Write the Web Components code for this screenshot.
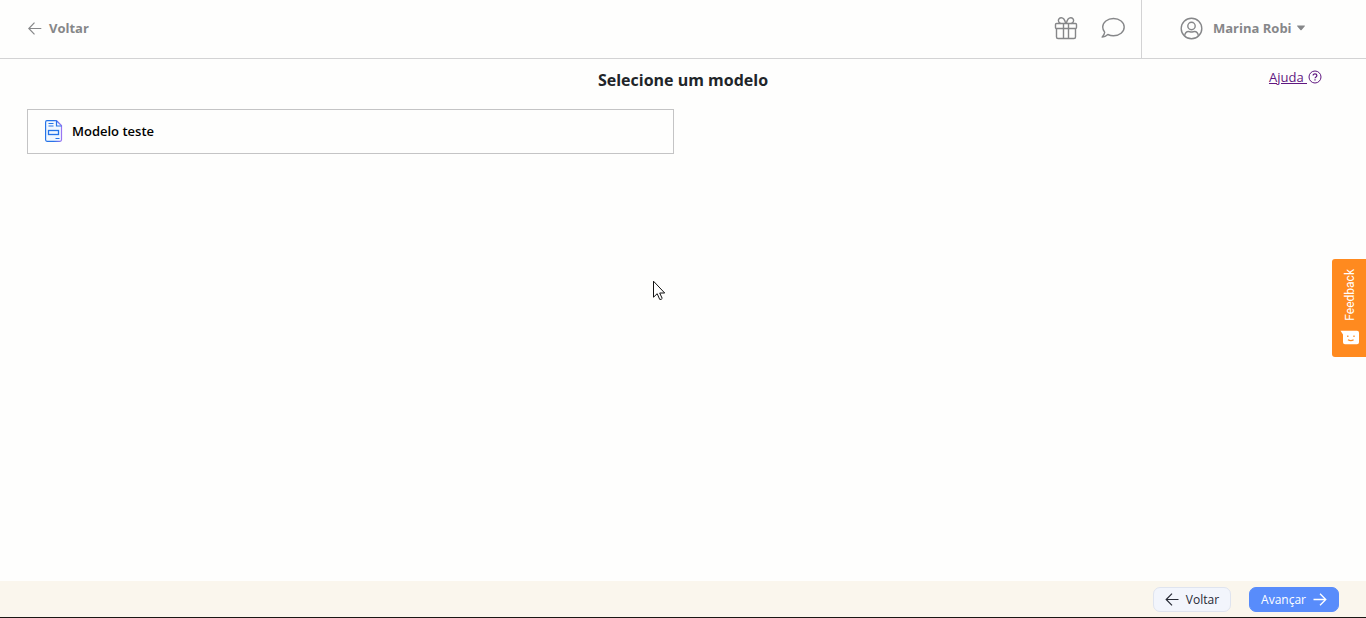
<!DOCTYPE html>
<html lang="pt-BR">
<head>
<meta charset="utf-8">
<meta name="viewport" content="width=device-width, initial-scale=1">
<title>Selecione um modelo</title>
<style>
  body { margin: 0; background: #fefefd; color: #212529; font: 13px/20px "Open Sans", "Noto Sans", sans-serif; }
</style>
</head>
<body>
<template-page></template-page>

<script>
const define = (name, markup) => customElements.define(name, class extends HTMLElement {
  constructor() {
    super();
    this.attachShadow({ mode: 'open' }).innerHTML = markup;
  }
});

define('user-menu', `
  <style>
    :host { display: block; }
    button { display: flex; align-items: center; gap: 10px; padding: 0; border: 0; background: none; color: #868789; font: inherit; font-weight: 700; cursor: pointer; }
    .caret { margin-left: -6px; }
    svg { display: block; }
  </style>
  <button type="button" aria-haspopup="menu">
    <svg width="23" height="23" viewBox="0 0 23 23" fill="none" stroke="currentColor" stroke-width="1.4" aria-hidden="true">
      <circle cx="11.500" cy="11.500" r="10.300"/><circle cx="11.500" cy="9" r="3.700"/>
      <path d="M4.600 18.800c.5-3 2-4.300 3.800-4.300 1.200 0 1.700.5 3.100.5s1.900-.5 3.100-.5c1.800 0 3.300 1.300 3.800 4.300"/>
    </svg>
    <slot></slot>
    <svg class="caret" width="10" height="6" viewBox="0 0 10 6" fill="currentColor" aria-hidden="true"><path d="M1.500.5h7q.8 0 .3.800L5.600 4.900q-.6.600-1.200 0L1.200 1.300q-.5-.8.300-.8z"/></svg>
  </button>`);

define('top-bar', `
  <style>
    :host { display: block; border-bottom: 1px solid #d3d3d4; color: #868789; }
    header { display: flex; align-items: stretch; height: 58px; }
    nav, .tools, .account { display: flex; align-items: center; padding-bottom: 2px; }
    nav { flex: 1; padding-left: 28px; }
    a { display: flex; align-items: center; gap: 7px; color: inherit; font-weight: 700; text-decoration: none; }
    .tools { gap: 23px; padding-right: 16px; }
    .tools button { padding: 0; border: 0; background: none; color: inherit; cursor: pointer; }
    .account { box-sizing: border-box; width: 225px; padding-left: 38px; border-left: 1px solid #d3d3d4; }
    svg { display: block; }
  </style>
  <header>
    <nav><a href="#voltar">
      <svg width="14" height="14" viewBox="0 0 14 14" fill="none" stroke="currentColor" stroke-width="1.200" aria-hidden="true"><path d="M13.300 7.500H.800M6.500 1.700.800 7.500l5.700 5.800"/></svg>
      Voltar</a></nav>
    <div class="tools">
      <button type="button" aria-label="Novidades">
        <svg width="24" height="23" viewBox="0 0 24 23" fill="none" stroke="currentColor" stroke-width="1.400" stroke-linejoin="round" aria-hidden="true">
          <rect x="1.500" y="6.500" width="21" height="5" rx="1"/><path d="M2.500 11.500v8.500q0 1.500 1.500 1.500h16q1.500 0 1.500-1.500v-8.500M9.500 6.500v15M14.500 6.500v15"/>
          <path d="M11.700 6.500C11 3.400 9.600.8 7.300.8c-2 0-3 1.500-2.900 3 .1 1.300 1 2.200 2.100 2.700M12.300 6.500C13 3.400 14.400.8 16.700.8c2 0 3 1.500 2.900 3-.1 1.300-1 2.200-2.100 2.700"/>
        </svg>
      </button>
      <button type="button" aria-label="Mensagens">
        <svg width="24" height="22" viewBox="0 0 24 22" fill="none" stroke="currentColor" stroke-width="1.400" stroke-linejoin="round" aria-hidden="true"><path d="M12.500 1.500c6 0 10.700 3.800 10.700 8.600s-4.700 8.700-10.700 8.700c-2.100 0-4-.5-5.700-1.300-1.500 1.500-3.300 2.500-5.600 2.600 1.400-1.300 2.300-3.100 2.500-4.900-1.300-1.400-2-3.200-2-5.100 0-4.800 4.800-8.600 10.800-8.600z"/></svg>
      </button>
    </div>
    <div class="account"><user-menu>Marina Robi</user-menu></div>
  </header>`);

define('template-card', `
  <style>
    :host { display: block; }
    button { display: flex; align-items: center; gap: 9px; width: 100%; height: 45px; padding: 0 17px 2px; border: 1px solid #c4c4c5; background: transparent; color: #000; font: inherit; font-weight: 600; cursor: pointer; }
    svg { display: block; }
  </style>
  <button type="button">
    <svg width="18" height="22" viewBox="0 0 18 22" fill="none" aria-hidden="true">
      <defs><linearGradient id="edge" x1="0" x2="1"><stop offset=".5" stop-color="#2674e8"/><stop offset="1" stop-color="#9a75f2"/></linearGradient></defs>
      <path d="M2 .7h9.500l5 4.800v14.300q0 1.500-1.500 1.500H2Q.6 21.300.6 19.800V2.200Q.6.700 2 .7z" fill="#f2f8ff" stroke="url(#edge)" stroke-width="1.200"/>
      <path d="M11.500 1v5h5M3.500 3.500h5M3.500 6h5M10.500 18.500h4" stroke="#2674e8" stroke-width="1.200"/>
      <rect x="3.500" y="10.500" width="10" height="4" stroke="#2674e8" stroke-width="1.300"/>
    </svg>
    <slot></slot>
  </button>`);

define('help-link', `
  <style>
    :host { display: block; }
    a { display: flex; align-items: center; gap: 1px; color: #5f1780; text-decoration: none; }
    span { text-decoration: underline; white-space: pre; }
    svg { display: block; }
  </style>
  <a href="#ajuda"><span><slot></slot></span>
    <svg width="14" height="14" viewBox="0 0 14 14" fill="none" stroke="currentColor" aria-hidden="true"><circle cx="7" cy="7" r="6"/><path d="M5.100 5.600c0-2.300 3.800-2.200 3.800 0 0 1.300-1.900 1.300-1.900 2.700M7 9.300v1.200" stroke-width="1.200"/></svg>
  </a>`);

define('step-button', `
  <style>
    :host { display: block; }
    button { display: flex; align-items: center; gap: 7px; height: 25px; padding: 1px 11px 0; border: 1px solid #dfe4ef; border-radius: 7px; background: #f2f5fc; color: #272a35; font: inherit; font-size: 12px; cursor: pointer; }
    :host([primary]) button { border-color: #588cfb; background: #588cfb; color: #fff; }
  </style>
  <button type="button"><slot name="before"></slot><slot></slot><slot name="after"></slot></button>`);

define('feedback-tab', `
  <style>
    :host { display: block; position: fixed; right: 0; top: 50%; transform: translateY(-51%); }
    button { display: flex; flex-direction: column; align-items: center; justify-content: space-between; width: 34px; height: 98px; padding: 10px 0 12px 2px; border: 0; border-radius: 3px 0 0 3px; background: #ff8a1f; color: #fff; font: 12px/16px Roboto, "Liberation Sans", sans-serif; cursor: pointer; }
    span { writing-mode: vertical-rl; rotate: 180deg; }
    svg { display: block; }
  </style>
  <button type="button"><span><slot></slot></span>
    <svg width="20" height="15" viewBox="0 0 20 15" aria-hidden="true"><path d="M.5.700H17q2 0 2 2v9.600q0 2-2 2H5q-2 0-2-2V4.500z" fill="#fff"/><g fill="none" stroke="#ff8a1f" stroke-width="1.300"><path d="M7.800 5.500v1.600M14 5.500v1.600M8 9.700q2.800 1.900 5.600 0"/></g></svg>
  </button>`);

define('mouse-pointer', `
  <style>
    :host { display: block; position: fixed; left: 653px; top: 280px; pointer-events: none; }
    svg { display: block; }
  </style>
  <svg width="13" height="21" viewBox="0 0 13 21" fill="#fff" stroke="#111" aria-hidden="true"><path d="M.5 1.200v16l3.700-3.500 2.500 5.700q1.700.4 2.500-1l-2.500-5.400h5z"/></svg>`);

define('template-page', `
  <style>
    :host { display: flex; flex-direction: column; min-height: 100vh; }
    main { flex: 1; padding: 8px 27px; }
    .heading { display: grid; grid-template-columns: 1fr auto 1fr; align-items: start; }
    h1 { grid-column: 2; margin: 0; font-size: 16px; line-height: 26px; font-weight: 700; }
    help-link { justify-self: end; padding-right: 17px; }
    .list { display: grid; grid-template-columns: 1fr 1fr; gap: 18px; padding-top: 16px; }
    footer { display: flex; align-items: center; justify-content: flex-end; gap: 18px; height: 36px; padding-right: 27px; background: #faf6ed; border-bottom: 1px solid #1a1714; }
    svg { display: block; }
  </style>
  <top-bar></top-bar>
  <main>
    <div class="heading"><h1>Selecione um modelo</h1><help-link>Ajuda </help-link></div>
    <div class="list"><template-card>Modelo teste</template-card></div>
  </main>
  <footer>
    <step-button><svg slot="before" width="14" height="14" viewBox="0 0 14 14" fill="none" stroke="currentColor" stroke-width="1.200" aria-hidden="true"><path d="M13.500 6.500H1.200M7 .7 1.200 6.500 7 12.300"/></svg>Voltar</step-button>
    <step-button primary>Avançar<svg slot="after" width="14" height="14" viewBox="0 0 14 14" fill="none" stroke="currentColor" stroke-width="1.300" aria-hidden="true"><path d="M.5 6.500h12.300M7 .7l5.800 5.800L7 12.300"/></svg></step-button>
  </footer>
  <feedback-tab>Feedback</feedback-tab>
  <mouse-pointer></mouse-pointer>`);
</script>
</body>
</html>
